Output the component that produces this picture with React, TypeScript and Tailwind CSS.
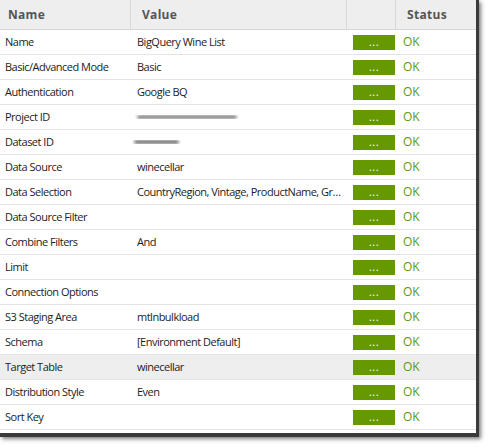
const rows: { name: string; value: string; blur?: "project" | "dataset"; selected?: boolean }[] = [
  { name: "Name", value: "BigQuery Wine List" },
  { name: "Basic/Advanced Mode", value: "Basic" },
  { name: "Authentication", value: "Google BQ" },
  { name: "Project ID", value: "", blur: "project" },
  { name: "Dataset ID", value: "", blur: "dataset" },
  { name: "Data Source", value: "winecellar" },
  { name: "Data Selection", value: "CountryRegion, Vintage, ProductName, Grape, Color" },
  { name: "Data Source Filter", value: "" },
  { name: "Combine Filters", value: "And" },
  { name: "Limit", value: "" },
  { name: "Connection Options", value: "" },
  { name: "S3 Staging Area", value: "mtlnbulkload" },
  { name: "Schema", value: "[Environment Default]" },
  { name: "Target Table", value: "winecellar", selected: true },
  { name: "Distribution Style", value: "Even" },
  { name: "Sort Key", value: "" },
];

export default function App() {
  return (
    <div className="w-[488px] h-[448px] bg-white font-['Open_Sans',sans-serif] text-[11px] tracking-[-0.5px] text-[#1c1c24]">
      <div className="w-[479px] h-[437px] border-r-[3px] border-b-[4px] border-[#3a3a3a] shadow-[2px_2px_4px_rgba(0,0,0,0.5)] bg-white overflow-hidden">
        <div className="grid grid-cols-[131px_216px_49px_1fr] h-[30px] bg-[#eeeeee] border-b border-[#d6d6d6] text-[12px] font-bold text-[#555] tracking-[0.3px]">
          <div className="pl-[8px] flex items-center border-r border-[#d8d8d8]">Name</div>
          <div className="pl-[11px] flex items-center border-r border-[#d8d8d8]">Value</div>
          <div className="border-r border-[#d8d8d8]" />
          <div className="pl-[11px] flex items-center">Status</div>
        </div>
        {rows.map((r) => (
          <div
            key={r.name}
            className={`grid grid-cols-[131px_216px_49px_1fr] h-[25px] border-b border-[#e4e4e4] items-center ${r.selected ? "bg-[#eeeeee]" : ""}`}
          >
            <div className="pl-[5px] whitespace-nowrap">{r.name}</div>
            <div className="pl-[6px] pr-[2px] whitespace-nowrap overflow-hidden text-ellipsis">
              {r.blur === "project" && (
                <div className="w-[100px] h-[4px] bg-[#888] rounded-full blur-[1.5px]" />
              )}
              {r.blur === "dataset" && (
                <div className="w-[45px] h-[4px] -ml-[3px] bg-[#777] rounded-full blur-[1.5px]" />
              )}
              {r.value}
            </div>
            <div className="pl-[6px]">
              <div className="w-[42px] h-[15px] bg-[#669900] text-white text-[11px] leading-[13px] text-center tracking-[0.5px]">
                ...
              </div>
            </div>
            <div className="pl-[7px] text-[12px] tracking-normal text-[#5a9a10]">OK</div>
          </div>
        ))}
      </div>
    </div>
  );
}
